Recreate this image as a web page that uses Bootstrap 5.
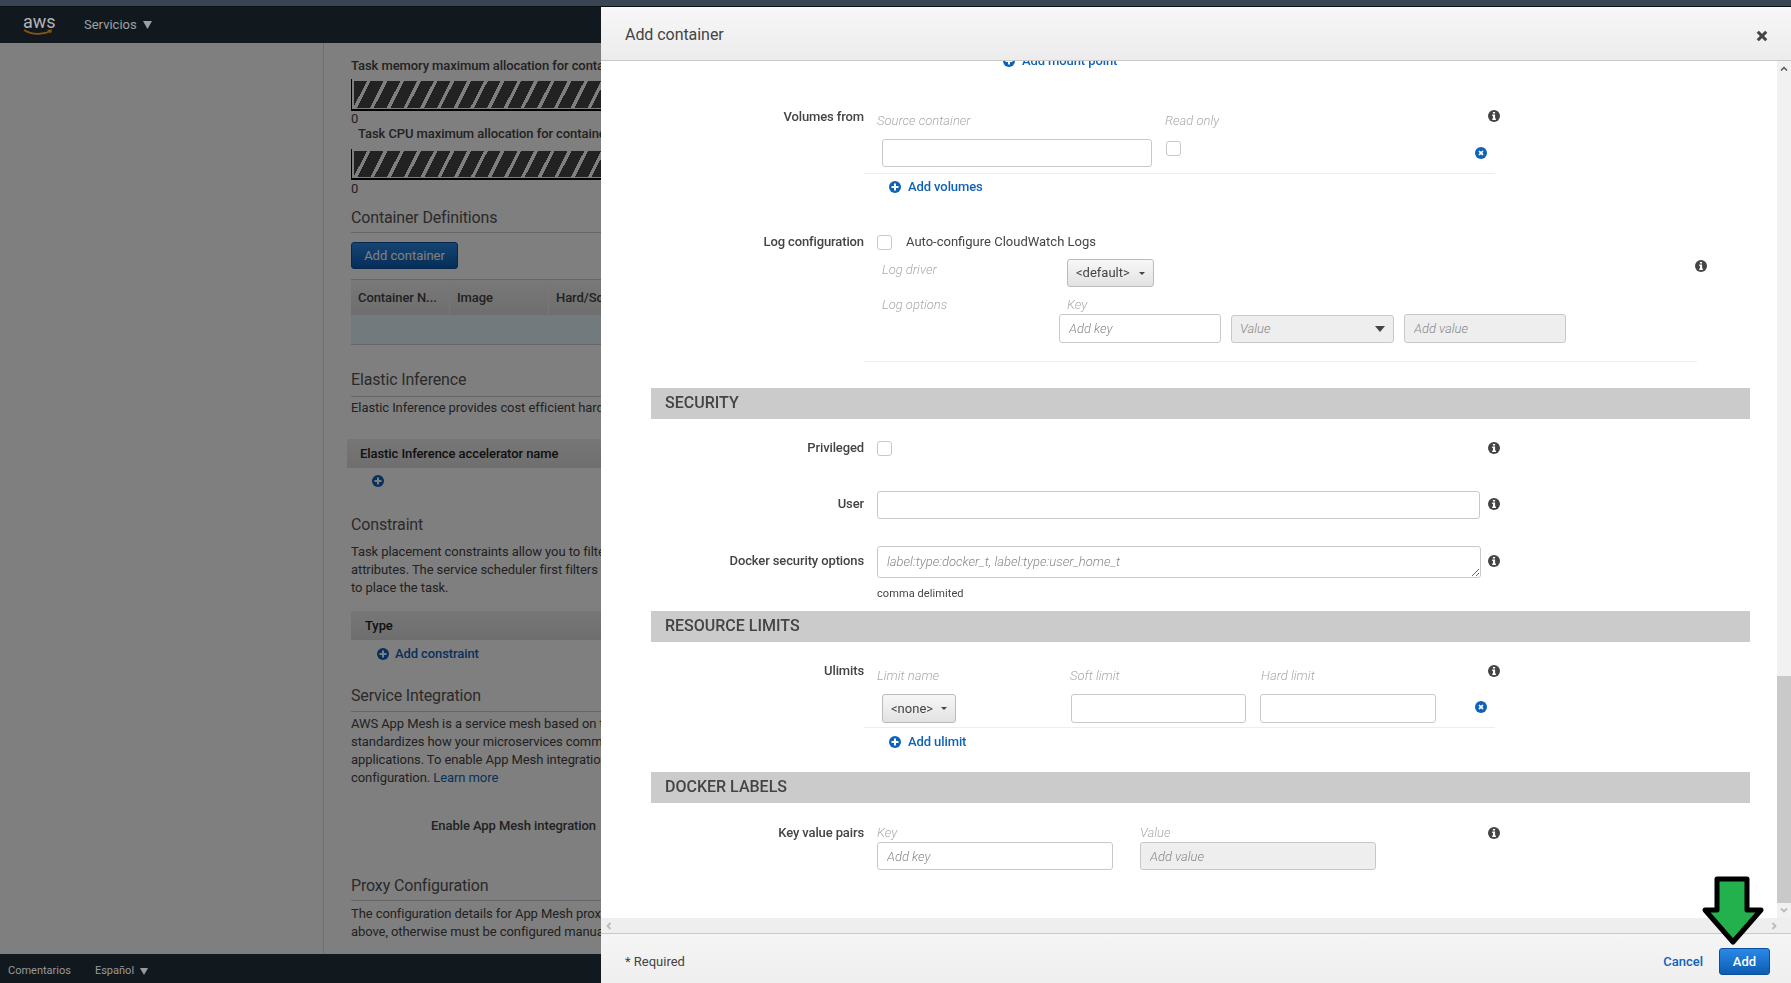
<!DOCTYPE html>
<html lang="en">
<head>
<meta charset="UTF-8">
<title>Add container</title>
<link href="https://cdn.jsdelivr.net/npm/bootstrap@5.3.0/dist/css/bootstrap.min.css" rel="stylesheet">
<style>
body { height: 983px; overflow: hidden; background: #fff; font: 13px/18px Roboto, "Liberation Sans", sans-serif; color: #444; }
svg { display: block; flex: none; }

/* page chrome */
.top-strip { position: fixed; top: 0; left: 0; right: 0; height: 7px; background: #3a4553; border-bottom: 1px solid #0c1116; z-index: 30; }
.aws-nav { margin-top: 6px; height: 37px; background: #11191f; color: #a0a0a0; position: relative; z-index: 20; }
.aws-logo { margin-left: 23px; width: 30px; }
.aws-logo span { display: block; font-size: 18px; line-height: 15px; height: 15px; color: #b4b4b4; text-align: center; }
.aws-foot { height: 29px; padding-top: 5px; background: #11191f; color: #9a9a9a; font-size: 11px; position: relative; z-index: 20; }
.dim-layer { position: fixed; inset: 0; background: rgba(0, 0, 0, .5); z-index: 10; }
.side-col { width: 324px; border-right: 1px solid #ddd; flex: none; }
.page-col { padding: 14px 0 0 27px; white-space: nowrap; overflow: hidden; flex: 1; height: 911px; letter-spacing: -.08px; }

.bold-line { font-weight: 500; line-height: 18px; }
.page-title { font-size: 16px; line-height: 20px; color: #555; letter-spacing: -.15px; }
.page-title.ruled { border-bottom: 1px solid #ccc; }
.hatch { height: 32px; margin-top: 4px; border-left: 1px solid #000; border-bottom: 2px solid #000; padding: 2px 0 1px 2px; }
.hatch div { height: 100%; background: repeating-linear-gradient(117deg, #444 0, #444 11.5px, #fff 11.5px, #fff 14.9px); }
.zero { line-height: 14px; }
.blue-btn { background: linear-gradient(#2a8ae8, #0d5cb0); border: 1px solid #0a4f9c; border-radius: 3px; color: #fff; font-size: 13px; font-weight: 500; padding: 0; }
.blue-btn:hover { color: #fff; background: #0d5cb0; }
.page-col .blue-btn { font-weight: 400; }
.grid-head { height: 36px; border-top: 1px solid #ccc; background: linear-gradient(#f2f2f2, #ddd); }
.grid-head > div { width: 99px; padding-left: 7px; border-right: 1px solid #eee; line-height: 36px; font-weight: 500; }
.grid-row { height: 30px; background: #e6f4fc; border-bottom: 1px solid #ccc; }
.bar-head { height: 29px; line-height: 29px; background: linear-gradient(#eee, #ddd); font-weight: 500; color: #222; }
.aws-link { color: #0f62ba; text-decoration: none; }
.add-line { height: 18px; gap: 7px; font-weight: 500; letter-spacing: -.1px; }

/* modal */
.add-modal { position: fixed; left: 601px; top: 7px; right: 0; bottom: 0; background: #fff; z-index: 40; border-top-left-radius: 3px; }
.add-modal-head { height: 54px; flex: none; background: linear-gradient(#f7f7f7, #ececec); border-bottom: 1px solid #c8c8c8; padding: 0 23px 0 24px; }
.add-modal-head h5 { font-size: 16px; font-weight: 400; margin: 2px 0 0; color: #444; letter-spacing: -.05px; }
.add-pane { height: 857px; flex: none; }
.add-scroll { flex: 1; overflow: hidden; min-width: 0; }
.v-track { width: 14px; flex: none; background: #f1f1f1; }
.v-thumb { height: 227px; margin-top: 615px; background: #c9c9c9; flex: none; }
.h-track { height: 16px; flex: none; background: #eee; border-bottom: 1px solid #c8c8c8; padding: 0 14px 0 5px; }
.add-modal-foot { flex: 1; background: linear-gradient(#f5f5f5, #efefef); padding: 6px 21px 0 24px; color: #444; }

.frow { display: flex; }
.flabel { width: 263px; margin-right: 13px; flex: none; text-align: end; font-weight: 500; color: #444; line-height: 18px; letter-spacing: -.12px; }
.hint { font-style: italic; font-weight: 300; color: #aaa; line-height: 18px; }
.sep { border-bottom: 1px solid #eee; }
.aws-input.form-control { height: 28px; min-height: 0; font-size: 13px; line-height: 18px; padding: 4px 9px; border: 1px solid #c8c8c8; border-radius: 3px; box-shadow: none; color: #444; }
.aws-input.form-control::placeholder { font-style: italic; font-weight: 300; color: #888; }
.aws-input.off { background: #eee; }
textarea.aws-input.form-control { height: 32px; padding: 6px 9px; resize: both; }
.aws-check.form-check-input { width: 15px; height: 15px; margin: 0; border: 1px solid #c8c8c8; border-radius: 3px; flex: none; }
.aws-drop.btn { height: 28px; padding: 0 8px; font-size: 13px; color: #444; background: linear-gradient(#f7f7f7, #e2e2e2); border: 1px solid #bbb; border-radius: 3px; display: flex; align-items: center; justify-content: space-between; }
.aws-drop.off.btn { background: #eee; border-color: #c8c8c8; color: #888; font-style: italic; font-weight: 300; }
.aws-drop.off.btn::after { border-top-width: 6px; border-left-width: 5px; border-right-width: 5px; margin-left: 0; color: #444; }
.sect-bar { margin-left: 50px; width: 1099px; height: 31px; line-height: 29px; padding-left: 14px; background: #cbcbcb; font-size: 16px; font-weight: 500; color: #444; }
.info-ic { margin-left: auto; }
.green-arrow { position: fixed; left: 1700px; top: 874px; z-index: 50; }
.foot-link { font-weight: 500; }
.delim-note { margin-top: 9px; font-size: 11px; line-height: 14px; letter-spacing: .08px; }
</style>
</head>
<body>

<svg width="0" height="0" class="position-absolute">
  <symbol id="ic-plus" viewBox="0 0 12 12"><circle cx="6" cy="6" r="6" fill="#0f62ba"/><path d="M5 2.500h2V5h2.500v2H7v2.500H5V7H2.500V5H5z" fill="#fff"/></symbol>
  <symbol id="ic-x" viewBox="0 0 12 12"><circle cx="6" cy="6" r="6" fill="#0f62ba"/><path d="M3.400 4.600l1.200-1.200L6 4.800l1.400-1.400 1.200 1.200L7.200 6l1.400 1.400-1.200 1.200L6 7.200 4.600 8.600 3.400 7.400 4.800 6z" fill="#fff"/></symbol>
  <symbol id="ic-info" viewBox="0 0 12 12"><circle cx="6" cy="6" r="6" fill="#444"/><path d="M4.900 1.900h2.200v1.700H4.900zM4.200 4.600h2.900v3.900h.8v1.500H4.200V8.500H5V6.100h-.8z" fill="#fff"/></symbol>
  <symbol id="ic-caret" viewBox="0 0 8 7"><path d="M0 0h8L4 7z" fill="currentColor"/></symbol>
</svg>

<div class="top-strip"></div>

<nav class="aws-nav d-flex align-items-center">
  <div class="aws-logo">
    <span>aws</span>
    <svg width="30" height="7" viewBox="0 0 30 7"><path d="M1 1c8 5 19 5 27 1" fill="none" stroke="#8a5410" stroke-width="1.600"/><path d="M24 1l5-.5-1 4z" fill="#8a5410"/></svg>
  </div>
  <span style="margin-left:31px">Servicios</span>
  <svg style="margin-left:6px" width="9" height="8"><use href="#ic-caret"/></svg>
</nav>

<main class="d-flex">
  <div class="side-col"></div>
  <div class="page-col">
    <div class="bold-line">Task memory maximum allocation for conta</div>
    <div class="hatch"><div></div></div>
    <div class="zero" style="margin-top:1px">0</div>
    <div class="bold-line zero" style="margin-top:1px;padding-left:7px">Task CPU maximum allocation for containe</div>
    <div class="hatch" style="margin-top:8px;height:31px"><div></div></div>
    <div class="zero" style="margin-top:2px">0</div>

    <div class="page-title ruled" style="margin-top:12px;padding-bottom:4px">Container Definitions</div>
    <button class="btn blue-btn d-block" style="margin-top:9px;width:107px;height:27px">Add container</button>
    <div class="grid-head d-flex" style="margin-top:10px"><div>Container N...</div><div>Image</div><div class="border-0">Hard/Sc</div></div>
    <div class="grid-row"></div>

    <div class="page-title ruled" style="margin-top:25px;padding-bottom:6px">Elastic Inference</div>
    <div style="margin-top:2px">Elastic Inference provides cost efficient hard</div>
    <div class="bar-head" style="margin:22px 0 0 -4px;padding-left:13px">Elastic Inference accelerator name</div>
    <div style="margin:4px 0 0 21px;height:18px" class="d-flex align-items-center"><svg width="12" height="12"><use href="#ic-plus"/></svg></div>

    <div class="page-title" style="margin-top:25px">Constraint</div>
    <div style="margin-top:8px">Task placement constraints allow you to filte<br>attributes. The service scheduler first filters t<br>to place the task.</div>
    <div class="bar-head" style="margin-top:14px;padding-left:14px">Type</div>
    <a href="#" class="aws-link add-line d-flex align-items-center" style="margin:5px 0 0 26px;gap:6px"><svg width="12" height="12"><use href="#ic-plus"/></svg>Add constraint</a>

    <div class="page-title ruled" style="margin-top:23px;padding-bottom:5px">Service Integration</div>
    <div style="margin-top:3px">AWS App Mesh is a service mesh based on t<br>standardizes how your microservices comm<br>applications. To enable App Mesh integration<br>configuration. <a href="#" class="aws-link">Learn more</a></div>
    <div class="bold-line text-end" style="margin-top:30px;width:245px">Enable App Mesh integration</div>

    <div class="page-title ruled" style="margin-top:41px;padding-bottom:4px">Proxy Configuration</div>
    <div style="margin-top:4px">The configuration details for App Mesh proxy<br>above, otherwise must be configured manua</div>
  </div>
</main>

<footer class="aws-foot d-flex align-items-center">
  <span style="margin-left:8px">Comentarios</span>
  <span style="margin-left:24px">Español</span>
  <svg style="margin-left:6px" width="8" height="7"><use href="#ic-caret"/></svg>
</footer>

<div class="dim-layer"></div>

<div class="add-modal d-flex flex-column">
  <div class="add-modal-head d-flex align-items-center justify-content-between">
    <h5>Add container</h5>
    <svg width="12" height="12" viewBox="0 0 12 12" class="mt-1"><path d="M2.800 1L6 4.200 9.200 1 11 2.800 7.800 6 11 9.200 9.200 11 6 7.800 2.800 11 1 9.200 4.200 6 1 2.800z" fill="#444" stroke="#444" stroke-width=".6"/></svg>
  </div>

  <div class="add-pane d-flex">
    <div class="add-scroll">
      <a href="#" class="aws-link add-line d-flex align-items-center" style="margin:-9px 0 0 402px"><svg width="12" height="12"><use href="#ic-plus"/></svg>Add mount point</a>

      <!-- volumes from -->
      <div class="frow" style="margin-top:38px">
        <div class="flabel">Volumes from</div>
        <div class="sep" style="width:631px;margin-left:-13px;padding-left:13px;padding-bottom:6px">
          <div class="d-flex">
            <div class="hint" style="width:288px;margin-top:4px">Source container</div>
            <div class="hint" style="margin-top:4px">Read only</div>
            <svg class="info-ic" style="margin-top:2px;margin-right:-5px" width="12" height="12"><use href="#ic-info"/></svg>
          </div>
          <div class="d-flex" style="margin-top:9px">
            <input class="form-control aws-input" style="width:270px;margin-left:5px">
            <input type="checkbox" class="form-check-input aws-check" style="margin:2px 0 0 14px">
            <svg style="margin:8px 8px 0 auto" width="12" height="12"><use href="#ic-x"/></svg>
          </div>
        </div>
      </div>
      <a href="#" class="aws-link add-line d-flex align-items-center" style="margin:4px 0 0 288px"><svg width="12" height="12"><use href="#ic-plus"/></svg>Add volumes</a>

      <!-- log configuration -->
      <div class="frow" style="margin-top:37px">
        <div class="flabel">Log configuration</div>
        <div class="sep" style="width:833px;margin-left:-13px;padding-left:13px;padding-bottom:18px">
          <div class="d-flex align-items-center" style="gap:14px"><input type="checkbox" class="form-check-input aws-check">Auto-configure CloudWatch Logs</div>
          <div class="d-flex" style="margin:8px 0 0 5px">
            <div class="hint" style="width:185px;margin-top:2px">Log driver</div>
            <button class="btn dropdown-toggle aws-drop" style="width:87px">&lt;default&gt;</button>
          </div>
          <div class="d-flex" style="margin:9px 0 0 5px">
            <div class="hint" style="width:177px">Log options</div>
            <div>
              <div class="hint" style="margin-left:8px">Key</div>
              <div class="d-flex" style="gap:10px">
                <input class="form-control aws-input" style="width:162px;height:29px" placeholder="Add key">
                <button class="btn dropdown-toggle aws-drop off" style="width:163px;height:28px;margin-top:1px">Value</button>
                <input class="form-control aws-input off" style="width:162px;height:29px" placeholder="Add value">
              </div>
            </div>
          </div>
        </div>
        <svg style="margin:27px 0 0 -2px" width="12" height="12"><use href="#ic-info"/></svg>
      </div>

      <div class="sect-bar" style="margin-top:26px">SECURITY</div>

      <div class="frow" style="margin-top:20px">
        <div class="flabel">Privileged</div>
        <div class="d-flex" style="width:623px">
          <input type="checkbox" class="form-check-input aws-check" style="margin-top:2px">
          <svg class="info-ic" style="margin-top:3px" width="12" height="12"><use href="#ic-info"/></svg>
        </div>
      </div>

      <div class="frow" style="margin-top:34px">
        <div class="flabel" style="margin-top:4px">User</div>
        <div class="d-flex" style="width:623px">
          <input class="form-control aws-input" style="width:603px">
          <svg class="info-ic" style="margin-top:7px" width="12" height="12"><use href="#ic-info"/></svg>
        </div>
      </div>

      <div class="frow" style="margin-top:27px">
        <div class="flabel" style="margin-top:6px">Docker security options</div>
        <div style="width:623px;height:53px">
          <div class="d-flex">
            <textarea class="form-control aws-input" style="width:604px" placeholder="label:type:docker_t, label:type:user_home_t"></textarea>
            <svg class="info-ic" style="margin-top:9px" width="12" height="12"><use href="#ic-info"/></svg>
          </div>
          <div class="delim-note">comma delimited</div>
        </div>
      </div>

      <div class="sect-bar" style="margin-top:12px">RESOURCE LIMITS</div>

      <div class="frow" style="margin-top:19px">
        <div class="flabel" style="margin-top:1px">Ulimits</div>
        <div class="sep" style="width:631px;margin-left:-13px;padding-left:13px;padding-bottom:4px">
          <div class="d-flex">
            <div class="hint" style="width:193px;margin-top:6px">Limit name</div>
            <div class="hint" style="width:191px;margin-top:6px">Soft limit</div>
            <div class="hint" style="margin-top:6px">Hard limit</div>
            <svg class="info-ic" style="margin-top:4px;margin-right:-5px" width="12" height="12"><use href="#ic-info"/></svg>
          </div>
          <div class="d-flex" style="margin-top:9px">
            <button class="btn dropdown-toggle aws-drop" style="width:74px;height:29px;margin-left:5px">&lt;none&gt;</button>
            <input class="form-control aws-input" style="width:175px;height:29px;margin-left:115px">
            <input class="form-control aws-input" style="width:176px;height:29px;margin-left:14px">
            <svg style="margin:7px 8px 0 auto" width="12" height="12"><use href="#ic-x"/></svg>
          </div>
        </div>
      </div>
      <a href="#" class="aws-link add-line d-flex align-items-center" style="margin:5px 0 0 288px"><svg width="12" height="12"><use href="#ic-plus"/></svg>Add ulimit</a>

      <div class="sect-bar" style="margin-top:21px">DOCKER LABELS</div>

      <div class="frow" style="margin-top:21px">
        <div class="flabel">Key value pairs</div>
        <div style="width:623px">
          <div class="d-flex">
            <div class="hint" style="width:263px">Key</div>
            <div class="hint">Value</div>
            <svg class="info-ic" style="margin-top:3px" width="12" height="12"><use href="#ic-info"/></svg>
          </div>
          <div class="d-flex" style="gap:27px">
            <input class="form-control aws-input" style="width:236px" placeholder="Add key">
            <input class="form-control aws-input off" style="width:236px" placeholder="Add value">
          </div>
        </div>
      </div>
    </div>

    <div class="v-track d-flex flex-column">
      <svg class="position-absolute" style="margin:5px 0 0 3px" width="8" height="6" viewBox="0 0 8 6"><path d="M1 4.500l3-3 3 3" fill="none" stroke="#555" stroke-width="1.500"/></svg>
      <div class="v-thumb"></div>
      <svg style="margin:4px 0 0 3px" width="8" height="6" viewBox="0 0 8 6"><path d="M1 1.500l3 3 3-3" fill="none" stroke="#bbb" stroke-width="1.800"/></svg>
    </div>
  </div>

  <div class="h-track d-flex align-items-center justify-content-between">
    <svg width="6" height="8" viewBox="0 0 6 8"><path d="M4.500 1l-3 3 3 3" fill="none" stroke="#bbb" stroke-width="1.800"/></svg>
    <svg width="6" height="8" viewBox="0 0 6 8"><path d="M1.500 1l3 3-3 3" fill="none" stroke="#bbb" stroke-width="1.800"/></svg>
  </div>

  <div class="add-modal-foot d-flex align-items-center">
    <span>* Required</span>
    <a href="#" class="aws-link foot-link ms-auto" style="margin-right:16px">Cancel</a>
    <button class="btn blue-btn" style="width:51px;height:27px">Add</button>
  </div>
</div>

<svg class="green-arrow" width="67" height="74" viewBox="0 0 67 74">
  <path d="M17 5h30v31h14L33 68 5 36h12z" fill="#22b14c" stroke="#000" stroke-width="5" stroke-linejoin="round"/>
</svg>

</body>
</html>
